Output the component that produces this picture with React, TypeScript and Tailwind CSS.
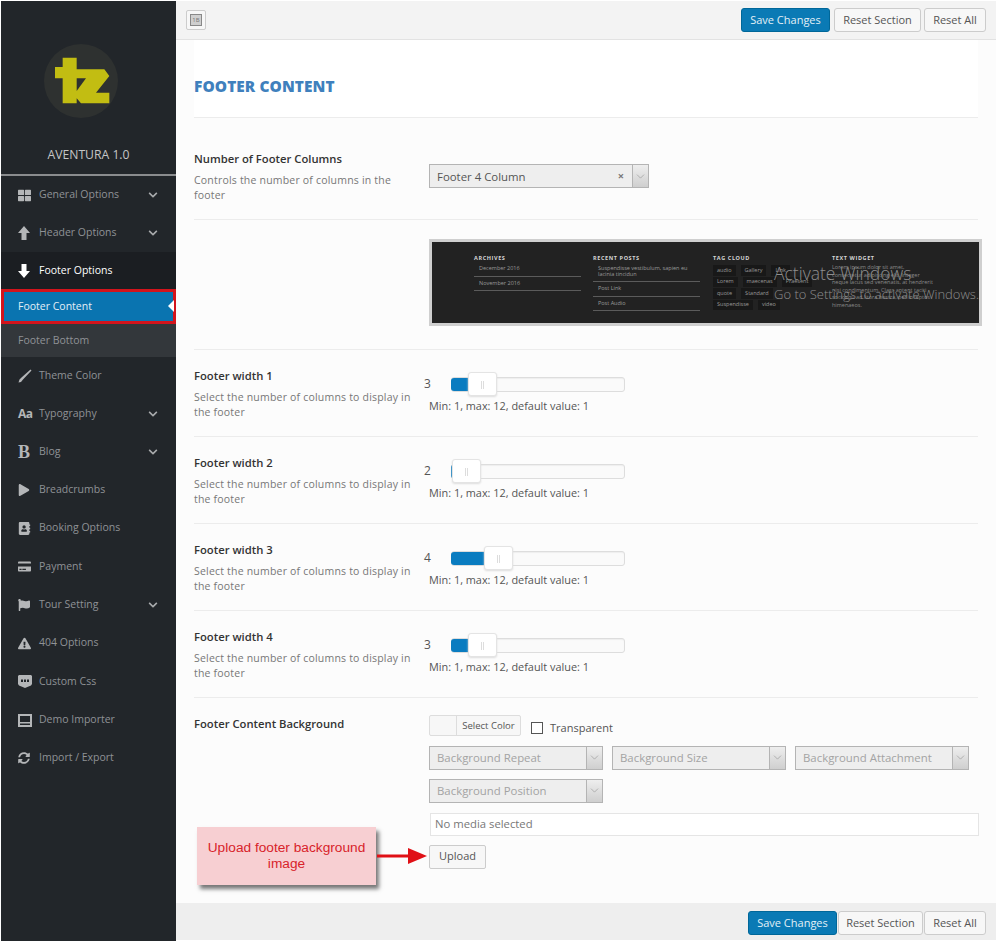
import type { ReactNode } from "react";
import {
  FaAddressBook,
  FaChevronDown,
  FaCreditCard,
  FaExclamationTriangle,
  FaFlag,
  FaPlay,
  FaSyncAlt,
  FaThLarge,
} from "react-icons/fa";
import { LuChevronDown } from "react-icons/lu";

const BrushIcon = () => (
  <svg viewBox="0 0 14 14" className="h-[14px] w-[14px]" fill="currentColor">
    <path d="M12.5 0.5 13.5 1.5 5 10.5 3 13 0.5 13.5 1.5 10.5 3.5 8.5Z" />
  </svg>
);

const BlockArrow = ({ down }: { down?: boolean }) => (
  <svg
    viewBox="0 0 12 14"
    className={`h-[14px] w-[12px] ${down ? "rotate-180" : ""}`}
    fill="currentColor"
  >
    <path d="M6 0 12 7H8.5V14H3.5V7H0Z" />
  </svg>
);

const CssIcon = () => (
  <svg viewBox="0 0 14 13" className="h-[13px] w-[14px]" fill="currentColor">
    <path d="M1 0H13L14 1V9L13 10.5 7 13 1 10.5 0 9V1Z" />
    <rect x="3" y="4.5" width="2" height="2.5" fill="#22262a" />
    <rect x="6" y="4.5" width="2" height="2.5" fill="#22262a" />
    <rect x="9" y="4.5" width="2" height="2.5" fill="#22262a" />
  </svg>
);

const ImporterIcon = () => (
  <svg viewBox="0 0 14 13" className="h-[13px] w-[14px]" fill="currentColor">
    <path d="M0 0H14V13H0ZM2 2V8H12V2ZM2 9.5V11H12V9.5Z" fillRule="evenodd" />
  </svg>
);

const AaIcon = () => <span className="text-[12px] font-bold tracking-[-0.5px]">Aa</span>;
const BlogIcon = () => (
  <span className="font-['Liberation_Serif',serif] text-[18px] leading-none font-bold">B</span>
);

type NavItem = { label: string; icon: ReactNode; arrow?: boolean; h: string };

const topNav: NavItem[] = [
  { label: "General Options", icon: <FaThLarge size={13} />, arrow: true, h: "h-[38px]" },
  { label: "Header Options", icon: <BlockArrow />, arrow: true, h: "h-[38px]" },
];

const bottomNav: NavItem[] = [
  { label: "Theme Color", icon: <BrushIcon />, h: "h-[38px]" },
  { label: "Typography", icon: <AaIcon />, arrow: true, h: "h-[38px]" },
  { label: "Blog", icon: <BlogIcon />, arrow: true, h: "h-[38px]" },
  { label: "Breadcrumbs", icon: <FaPlay size={12} />, h: "h-[38px]" },
  { label: "Booking Options", icon: <FaAddressBook size={13} />, h: "h-[38px]" },
  { label: "Payment", icon: <FaCreditCard size={13} />, h: "h-[39px]" },
  { label: "Tour Setting", icon: <FaFlag size={12} />, arrow: true, h: "h-[38px]" },
  { label: "404 Options", icon: <FaExclamationTriangle size={13} />, h: "h-[38px]" },
  { label: "Custom Css", icon: <CssIcon />, h: "h-[39px]" },
  { label: "Demo Importer", icon: <ImporterIcon />, h: "h-[38px]" },
  { label: "Import / Export", icon: <FaSyncAlt size={12} />, h: "h-[38px]" },
];

function NavRow({ item }: { item: NavItem }) {
  return (
    <div className={`flex items-center pl-[17px] pr-[18px] text-[#8f9296] ${item.h}`}>
      <span className="flex w-[21px] justify-start text-[#b4b6b8]">{item.icon}</span>
      <span className="flex-1 text-[10.5px]">{item.label}</span>
      {item.arrow && <FaChevronDown size={10} className="text-[#a8aaac]" />}
    </div>
  );
}

function Sidebar() {
  return (
    <aside className="w-[175px] shrink-0 bg-[#22262a]">
      <div className="flex h-[175px] flex-col items-center border-b-2 border-[#8a8c8e]">
        <svg viewBox="0 0 240 240" className="mt-[40px] -ml-[15px] h-[80px] w-[80px]">
          <circle cx="120" cy="120" r="111" fill="#2e3130" />
          <path
            d="M65 50H107V85H190L205 105 165 155H205V187H120L107 172V187H65V112H42V78H65Z"
            fill="#c2bd12"
          />
          <path d="M107 112H135L107 150Z" fill="#2e3130" />
        </svg>
        <div className="mt-[26px] text-[12.2px] leading-[16px] text-[#c4c5c6]">AVENTURA 1.0</div>
      </div>
      {topNav.map((item) => (
        <NavRow key={item.label} item={item} />
      ))}
      <div className="flex h-[37px] items-center bg-[#1b1e22] pl-[17px] text-white">
        <span className="w-[21px]">
          <BlockArrow down />
        </span>
        <span className="text-[10.5px]">Footer Options</span>
      </div>
      <div className="relative h-[35px] border-[3px] border-[#d3141c] bg-[#0a74b0] pl-[14px] text-[10.5px] leading-[29px] text-[#e4eff6]">
        Footer Content
        <span className="absolute top-[8px] right-[-1px] h-0 w-0 border-y-[6px] border-r-[6px] border-y-transparent border-r-white" />
      </div>
      <div className="flex h-[33px] items-center bg-[#33373b] pl-[17px] text-[10.5px] text-[#8f9296]">
        Footer Bottom
      </div>
      {bottomNav.map((item) => (
        <NavRow key={item.label} item={item} />
      ))}
    </aside>
  );
}

function Btn({ label, className }: { label: string; className: string }) {
  return (
    <button
      className={`flex h-[24px] items-center justify-center rounded-[3px] border text-[11px] ${className}`}
    >
      {label}
    </button>
  );
}

function Actions({ wide }: { wide?: boolean }) {
  return (
    <div className={`flex ${wide ? "gap-[3px]" : "gap-[1px]"}`}>
      <Btn
        label="Save Changes"
        className={`w-[89px] border-[#006799] bg-[#0a7ab5] text-[#e3f0f7] ${wide ? "mr-[1px]" : ""}`}
      />
      <Btn
        label="Reset Section"
        className={`${wide ? "w-[87px]" : "w-[85px]"} border-[#cccccc] bg-[#f7f7f7] text-[#555555]`}
      />
      <Btn label="Reset All" className="w-[62px] border-[#cccccc] bg-[#f7f7f7] text-[#555555]" />
    </div>
  );
}

function Select({
  label,
  width,
  clear,
  disabled,
}: {
  label: string;
  width: string;
  clear?: boolean;
  disabled?: boolean;
}) {
  return (
    <div className={`flex h-[24px] items-center border border-[#b4b4b4] bg-[#eeeeee] ${width}`}>
      <span
        className={`flex-1 pt-[1px] pl-[7px] text-[11.4px] ${disabled ? "text-[#a3a3a3]" : "text-[#555555]"}`}
      >
        {label}
      </span>
      {clear && <span className="mr-[8px] text-[11px] font-bold text-[#777777]">×</span>}
      <span className="flex h-full w-[16px] items-center justify-center border-l border-[#b4b4b4] bg-gradient-to-b from-[#eeeeee] to-[#cfcfcf] text-[#999999]">
        <LuChevronDown size={13} strokeWidth={1.25} />
      </span>
    </div>
  );
}

function Row({
  title,
  desc,
  top,
  height,
  children,
}: {
  title: string;
  desc?: string;
  top: string;
  height: string;
  children: ReactNode;
}) {
  return (
    <section
      className={`grid grid-cols-[235px_1fr] border-t border-[#ececec] ${top} ${height}`}
    >
      <div className="w-[225px]">
        <h3 className="text-[11.25px] leading-[16px] font-semibold text-[#333333]">{title}</h3>
        {desc && (
          <p className="mt-[6px] text-[10.5px] leading-[15px] tracking-[0.2px] text-[#777777]">
            {desc}
          </p>
        )}
      </div>
      <div>{children}</div>
    </section>
  );
}

function Slider({ value, handle }: { value: number; handle: number }) {
  return (
    <div>
      <div className="-ml-[5px] flex h-[24px] items-center">
        <span className="w-[27px] text-[12px] text-[#555555]">{value}</span>
        <div className="relative h-[15px] w-[174px] rounded-[3px] border border-[#dddddd] bg-[#fafafa] shadow-[inset_0_1px_1px_#eeeeee]">
          <div
            className="absolute top-0 left-[-1px] h-full rounded-l-[3px] bg-[#0a7cc0]"
            style={{ width: handle + 2 }}
          />
          <div
            className="absolute top-[-6px] flex h-[24px] w-[29px] justify-center rounded-[3px] border border-[#e4e4e4] bg-white pt-[8px] shadow-[0_1px_2px_#dddddd]"
            style={{ left: handle }}
          >
            <span className="h-[8px] w-[3px] border-x border-[#dddddd]" />
          </div>
        </div>
      </div>
      <div className="mt-[2px] text-[10.9px] leading-[15px] text-[#555555]">
        Min: 1, max: 12, default value: 1
      </div>
    </div>
  );
}

function ThumbList({ title, items }: { title: string; items: string[] }) {
  return (
    <div className="w-[107px]">
      <div className="text-[5.5px] leading-[7px] font-bold tracking-[0.6px] text-[#d6d6d6]">
        {title}
      </div>
      {items.map((item) => (
        <div
          key={item}
          className="border-b border-[#5b5b5b] py-[4px] pl-[5px] text-[5.5px] leading-[5.5px] text-[#9a9a9a]"
        >
          {item}
        </div>
      ))}
    </div>
  );
}

const tagRows = [
  ["audio", "Gallery", "Link"],
  ["Lorem", "maecenas", "Praesent"],
  ["quote", "Standard"],
  ["Suspendisse", "video"],
];

function Thumbnail() {
  return (
    <div className="relative h-[87px] w-[553px] border-[3px] border-[#cfcfcf] bg-[#222222] pt-[13px] pl-[42px]">
      <div className="grid grid-cols-[119px_120px_119px_1fr]">
        <ThumbList title="ARCHIVES" items={["December 2016", "November 2016"]} />
        <ThumbList
          title="RECENT POSTS"
          items={["Suspendisse vestibulum, sapien eu lacinia tincidun", "Post Link", "Post Audio"]}
        />
        <div>
          <div className="text-[5.5px] leading-[7px] font-bold tracking-[0.6px] text-[#d6d6d6]">
            TAG CLOUD
          </div>
          <div className="mt-[3px] flex flex-col gap-y-[1px]">
            {tagRows.map((row) => (
              <div key={row[0]} className="flex gap-x-[5px]">
                {row.map((tag) => (
                  <span
                    key={tag}
                    className="bg-[#181818] px-[4px] py-[2.5px] text-[5.5px] leading-[5.5px] text-[#999999]"
                  >
                    {tag}
                  </span>
                ))}
              </div>
            ))}
          </div>
        </div>
        <div>
          <div className="text-[5.5px] leading-[7px] font-bold tracking-[0.6px] text-[#d6d6d6]">
            TEXT WIDGET
          </div>
          <p className="mt-[2px] w-[104px] text-[5.5px] leading-[7.5px] text-[#8a8a8a]">
            Lorem ipsum dolor sit amet, consectetur adipiscing elit. Integer neque lacus sed
            venenatis, at hendrerit nisi condimentum. Class aptent taciti sociosqu ad litora
            nostra, per inceptos himenaeos.
          </p>
        </div>
      </div>
      <div className="absolute top-[20px] left-[342px] text-[17.5px] leading-[22px] font-light whitespace-nowrap text-[#8e8e8e]">
        Activate Windows
      </div>
      <div className="absolute top-[44px] left-[342px] text-[13px] leading-[16px] font-light whitespace-nowrap text-[#8e8e8e]">
        Go to Settings to activate Windows.
      </div>
    </div>
  );
}

const widths = [
  { title: "Footer width 1", value: 3, handle: 16 },
  { title: "Footer width 2", value: 2, handle: 0 },
  { title: "Footer width 3", value: 4, handle: 32 },
  { title: "Footer width 4", value: 3, handle: 16 },
];

function Callout() {
  return (
    <div className="absolute top-[787px] left-[21px] flex items-center">
      <div className="flex h-[58px] w-[179px] items-center justify-center bg-[#f7cfd2] px-[8px] text-center font-['Liberation_Sans',sans-serif] text-[13.7px] leading-[16px] text-[#d8232a] shadow-[3px_4px_4px_#777777]">
        Upload footer background image
      </div>
      <svg viewBox="0 0 52 18" className="ml-[1px] h-[18px] w-[52px]">
        <path d="M0 7.5H31V1L50 9 31 17V10.5H0Z" fill="#e01016" />
      </svg>
    </div>
  );
}

export default function App() {
  return (
    <div className="flex h-[941px] w-[1000px] overflow-hidden bg-white pt-px pl-px font-['Open_Sans',sans-serif]">
      <Sidebar />
      <main className="flex h-[939px] w-[820px] flex-col bg-[#fcfcfc]">
        <header className="flex h-[39px] shrink-0 items-center justify-between border-b border-[#e2e2e2] bg-[#f3f3f3] px-[10px]">
          <span className="flex h-[20px] w-[20px] items-center justify-center rounded-[2px] border border-[#cccccc] bg-[#f7f7f7]">
            <span className="flex h-[12px] w-[12px] items-center justify-center border border-[#888888] bg-[#cfcfcf] text-[6px] leading-none text-[#777777]">
              1B
            </span>
          </span>
          <Actions wide />
        </header>
        <div className="relative flex-1 px-[18px]">
          <div className="flex h-[77px] w-[784px] items-center bg-white pt-[16px] text-[15.4px] font-extrabold tracking-[0.1px] text-[#3f80bd]">
            FOOTER CONTENT
          </div>
          <Row
            title="Number of Footer Columns"
            desc="Controls the number of columns in the footer"
            top="pt-[33px]"
            height="h-[102px]"
          >
            <div className="mt-[13px]">
              <Select label="Footer 4 Column" width="w-[220px]" clear />
            </div>
          </Row>
          <section className="grid h-[130px] grid-cols-[235px_1fr] border-t border-[#ececec] pt-[19px]">
            <div />
            <Thumbnail />
          </section>
          {widths.map((w) => (
            <Row
              key={w.title}
              title={w.title}
              desc="Select the number of columns to display in the footer"
              top="pt-[18px]"
              height="h-[87px]"
            >
              <div className="mt-[4px]">
                <Slider value={w.value} handle={w.handle} />
              </div>
            </Row>
          ))}
          <Row title="Footer Content Background" top="pt-[18px]" height="h-[206px]">
            <div className="-mt-[1px] flex items-center gap-[10px]">
              <div className="flex h-[21px] w-[92px] rounded-[2px] border border-[#dddddd] bg-[#f7f7f7]">
                <span className="w-[27px] border-r border-[#dddddd]" />
                <span className="flex-1 text-center text-[9.5px] leading-[19px] text-[#555555]">
                  Select Color
                </span>
              </div>
              <span className="mt-[4px] h-[12px] w-[12px] border border-[#555555] bg-white" />
              <span className="-ml-[3px] mt-[5px] text-[11px] text-[#555555]">Transparent</span>
            </div>
            <div className="mt-[9px] flex gap-[9px]">
              <Select label="Background Repeat" width="w-[174px]" disabled />
              <Select label="Background Size" width="w-[174px]" disabled />
              <Select label="Background Attachment" width="w-[174px]" disabled />
            </div>
            <div className="mt-[9px]">
              <Select label="Background Position" width="w-[174px]" disabled />
            </div>
            <div className="mt-[10px] ml-px flex h-[23px] w-[549px] items-center border border-[#e5e5e5] bg-white pt-[1px] pl-[4px] text-[11.3px] text-[#777777]">
              No media selected
            </div>
            <button className="mt-[9px] flex h-[24px] w-[57px] items-center justify-center rounded-[2px] border border-[#cccccc] bg-[#f7f7f7] text-[11px] text-[#555555]">
              Upload
            </button>
          </Row>
          <Callout />
        </div>
        <footer className="flex h-[37px] shrink-0 items-center justify-end bg-[#eeeeee] pt-[3px] pr-[10px]">
          <Actions />
        </footer>
      </main>
    </div>
  );
}
